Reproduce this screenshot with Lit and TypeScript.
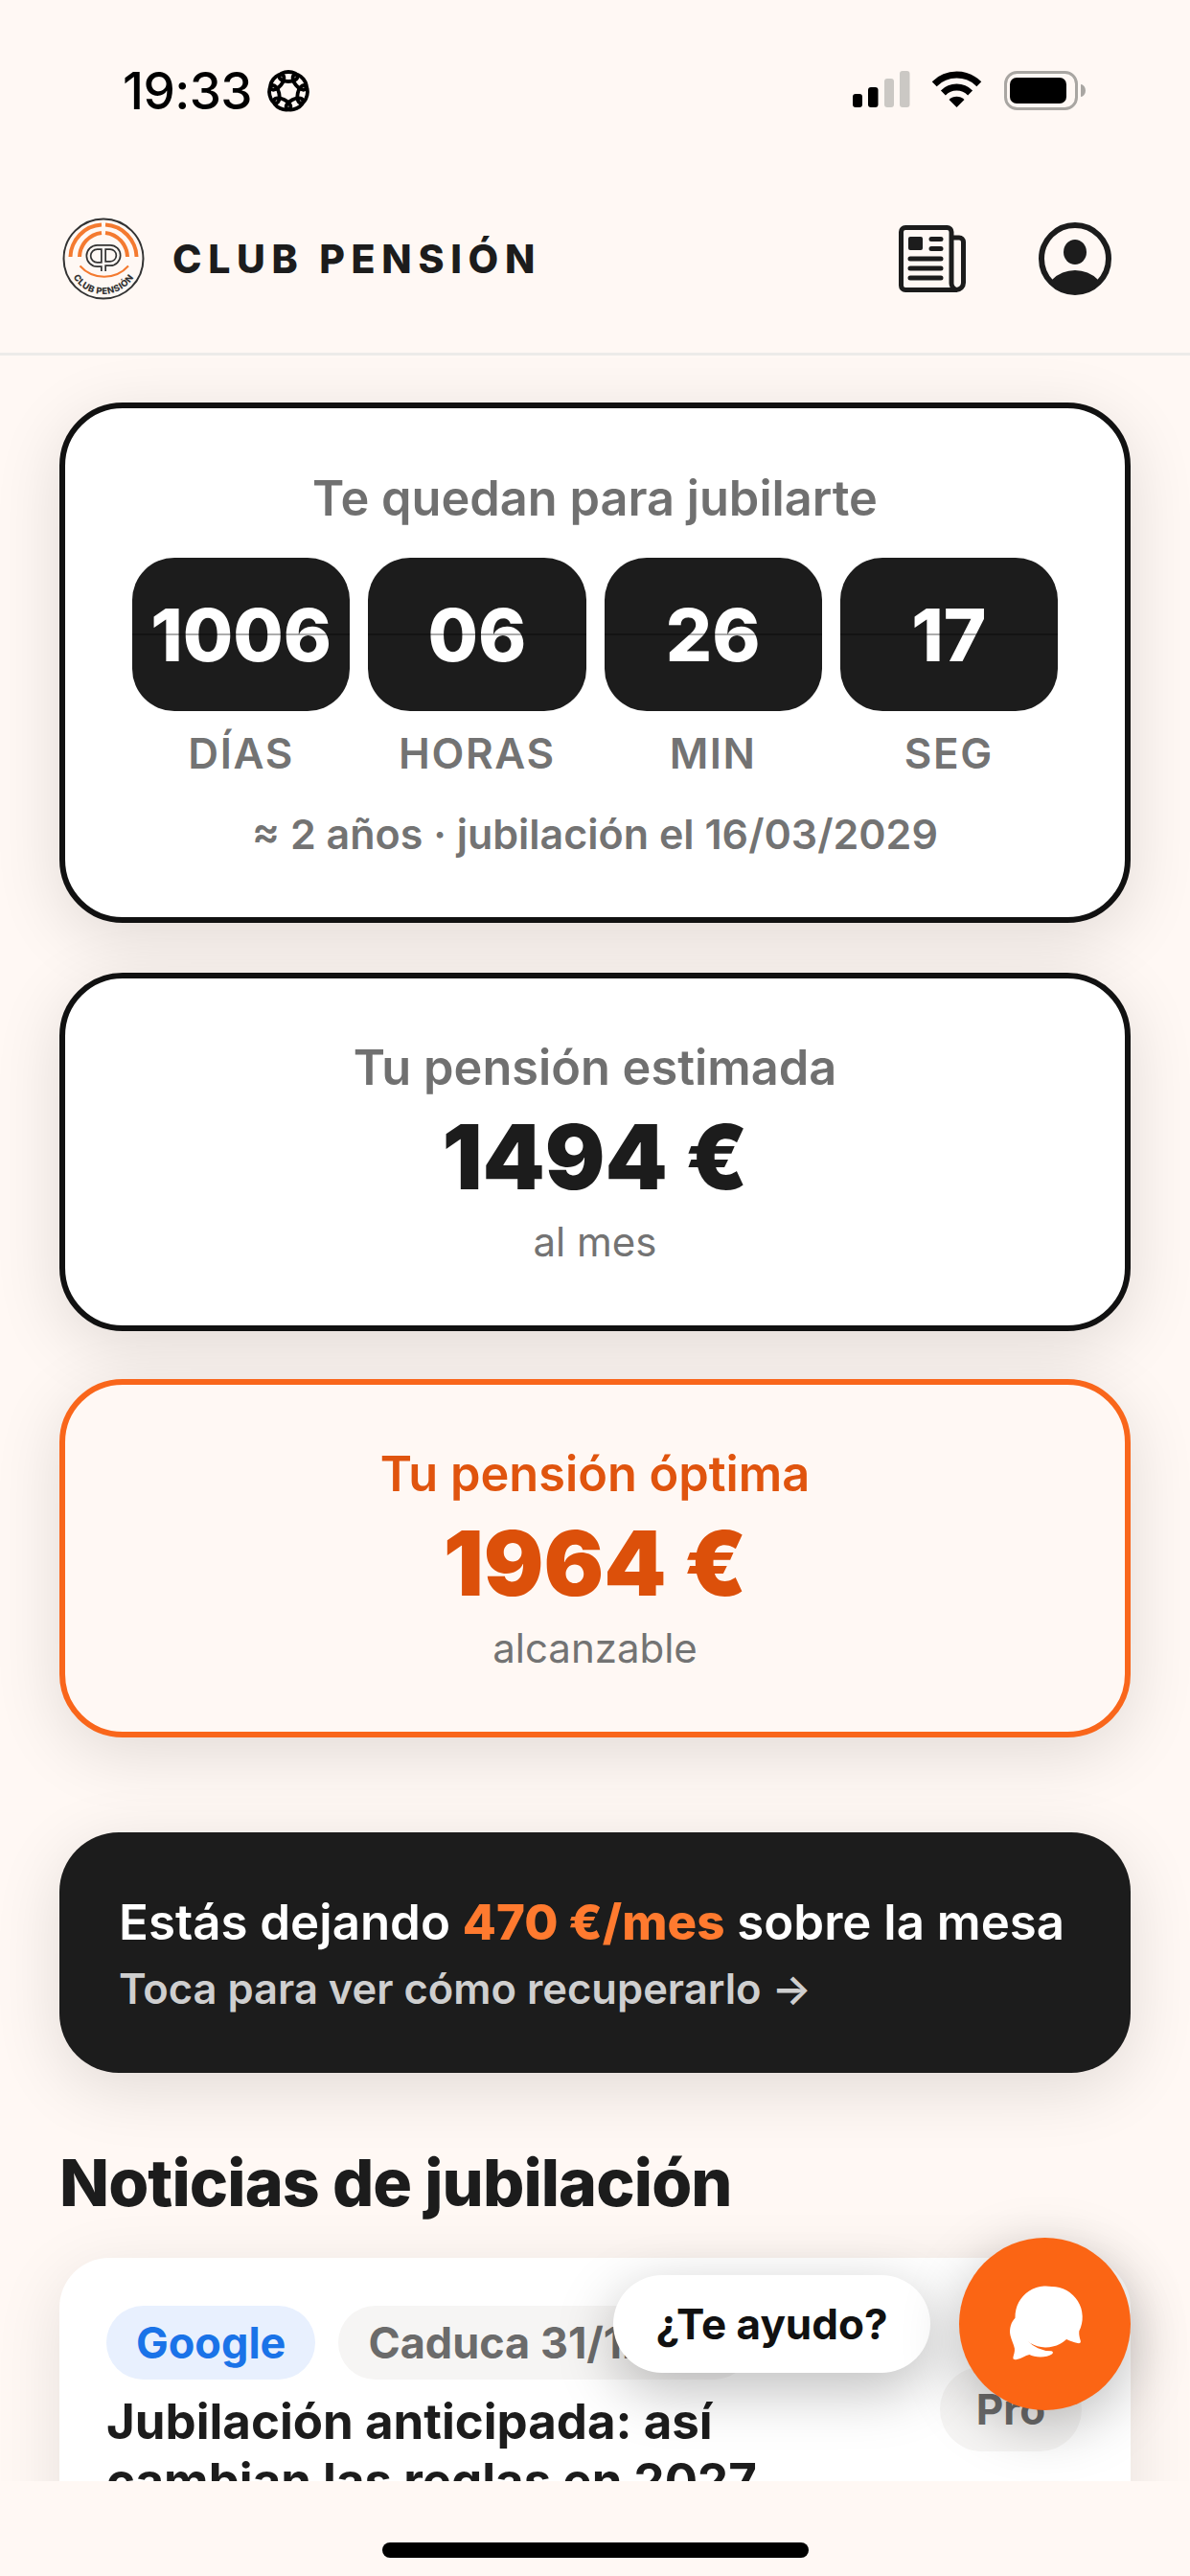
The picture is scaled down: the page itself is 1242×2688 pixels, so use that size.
import { LitElement, html, css, svg } from "lit";
import { customElement } from "lit/decorators.js";

const flower = () => svg`${[0, 1, 2, 3, 4, 5, 6].map(
  (i) => svg`<ellipse cx="24" cy="9" rx="9.500" ry="5" transform="rotate(${(i * 360) / 7} 24 24)" />`
)}`;

@customElement("app-root")
export class AppRoot extends LitElement {
  static styles = css`
    :host {
      display: flex;
      flex-direction: column;
      position: relative;
      width: 1242px;
      height: 2688px;
      overflow: hidden;
      background: #fff8f4;
      color: #1c1c1c;
      font-family: Inter, "Noto Sans", sans-serif;
    }
    svg { display: block; flex: none; }
    .status {
      flex: none;
      height: 171px;
      box-sizing: border-box;
      display: flex;
      align-items: flex-start;
      padding: 74px 109px 0 128px;
    }
    .time {
      font-size: 53px;
      font-weight: 500;
      line-height: 42px;
      color: #000;
      letter-spacing: -0.6px;
    }
    .focus { margin: -3px 0 0 14px; fill: none; stroke: #000; stroke-width: 3.8; }
    .sys { margin-left: auto; display: flex; align-items: flex-start; }
    .wifi { margin-left: 22px; }
    .batt { margin-left: 23px; }
    .header {
      flex: none;
      height: 200px;
      box-sizing: border-box;
      border-bottom: 3px solid #ecebe9;
      display: flex;
      align-items: center;
      padding: 0 82px 0 65px;
    }
    .brand {
      margin-left: 29px;
      font-size: 41px;
      font-weight: 800;
      letter-spacing: 6.7px;
      color: #1c1c1c;
    }
    .news-ico { margin-left: auto; }
    .user-ico { margin-left: 76px; }
    .main {
      flex: 1;
      min-height: 0;
      overflow: hidden;
      box-sizing: border-box;
      padding: 49px 62px 0;
      display: flex;
      flex-direction: column;
    }
    .card {
      flex: none;
      box-sizing: border-box;
      border: 6px solid #111;
      border-radius: 66px;
      background: #fff;
      text-align: center;
      box-shadow: 0 16px 70px rgba(0, 0, 0, 0.12);
      margin-bottom: 50px;
    }
    .timer { padding: 62px 70px 57px; margin-bottom: 52px; }
    .amount-card { padding: 61px 40px 59px; }
    .card-title {
      font-size: 50.5px;
      font-weight: 600;
      line-height: 64px;
      color: #707070;
    }
    .tiles {
      margin-top: 30px;
      display: grid;
      grid-template-columns: repeat(4, 1fr);
      column-gap: 19px;
    }
    .labels { margin-top: 0; }
    .tile {
      position: relative;
      height: 160px;
      border-radius: 44px;
      background: #1c1c1c;
      color: #fff;
      font-size: 76px;
      font-weight: 800;
      line-height: 160px;
    }
    .tile::after {
      content: "";
      position: absolute;
      left: 0;
      right: 0;
      top: 79px;
      height: 2px;
      background: rgba(0, 0, 0, 0.32);
    }
    .label {
      margin-top: 19px;
      font-size: 44px;
      font-weight: 600;
      line-height: 50px;
      letter-spacing: 1.6px;
      color: #737373;
    }
    .note {
      margin-top: 29px;
      font-size: 43px;
      font-weight: 600;
      line-height: 60px;
      color: #737373;
    }
    .amount {
      margin-top: 11px;
      font-size: 93px;
      font-weight: 900;
      line-height: 100px;
      color: #1c1c1c;
    }
    .sub {
      margin-top: 11px;
      font-size: 42px;
      line-height: 56px;
      color: #737373;
    }
    .best { border-color: #f9661b; background: #fff8f4; margin-bottom: 99px; }
    .best .card-title { color: #e0540e; }
    .best .amount { color: #dc500a; }
    .banner {
      flex: none;
      box-sizing: border-box;
      height: 251px;
      border-radius: 62px;
      background: #1c1c1c;
      padding: 64px 62px 0;
      box-shadow: 0 16px 70px rgba(0, 0, 0, 0.12);
    }
    .banner-main {
      font-size: 51px;
      font-weight: 600;
      line-height: 60px;
      color: #fff;
      white-space: nowrap;
    }
    .banner-main b { font-weight: 800; color: #ff7a2f; }
    .banner-sub {
      margin-top: 11px;
      font-size: 43.5px;
      font-weight: 600;
      line-height: 56px;
      color: #cfcfcf;
    }
    h2 {
      flex: none;
      margin: 74px 0 39px;
      font-size: 68px;
      font-weight: 800;
      line-height: 80px;
      letter-spacing: -0.9px;
      color: #1c1c1c;
    }
    .news {
      flex: none;
      position: relative;
      box-sizing: border-box;
      height: 400px;
      border-radius: 52px;
      background: #fff;
      padding: 50px 49px 0;
      box-shadow: 0 16px 70px rgba(0, 0, 0, 0.1);
    }
    .chips { display: flex; gap: 24px; }
    .chip {
      height: 77px;
      border-radius: 39px;
      padding: 0 31px;
      font-size: 45px;
      font-weight: 700;
      line-height: 77px;
      white-space: nowrap;
    }
    .google { background: #e8f0fe; color: #1a73e8; }
    .expires { background: #f6f5f4; color: #6b6b6b; }
    .pro {
      position: absolute;
      top: 114px;
      right: 51px;
      width: 148px;
      height: 88px;
      border-radius: 44px;
      background: #f6f5f4;
      color: #6b6b6b;
      font-size: 44px;
      font-weight: 700;
      line-height: 88px;
      text-align: center;
    }
    .news-title {
      margin-top: 13px;
      max-width: 800px;
      font-size: 51px;
      font-weight: 700;
      line-height: 62px;
      color: #1c1c1c;
    }
    .home {
      flex: none;
      height: 99px;
      box-sizing: border-box;
      padding-top: 64px;
      background: #fff8f4;
      position: relative;
      display: flex;
      justify-content: center;
    }
    .home i { display: block; width: 445px; height: 16px; border-radius: 8px; background: #000; }
    .help {
      position: absolute;
      right: 62px;
      bottom: 173px;
      display: flex;
      align-items: center;
      gap: 30px;
    }
    .bubble {
      width: 331px;
      height: 102px;
      border-radius: 51px;
      background: #fff;
      text-align: center;
      font-size: 44px;
      font-weight: 700;
      line-height: 102px;
      color: #111;
      box-shadow: 0 18px 60px rgba(0, 0, 0, 0.26);
    }
    .fab {
      width: 179px;
      height: 180px;
      border-radius: 50%;
      background: #fb6514;
      display: flex;
      align-items: center;
      justify-content: center;
      box-shadow: 0 16px 60px rgba(0, 0, 0, 0.26);
    }
  `;

  render() {
    const tiles = [
      ["1006", "DÍAS"],
      ["06", "HORAS"],
      ["26", "MIN"],
      ["17", "SEG"],
    ];
    return html`
      <div class="status">
        <span class="time">19:33</span>
        <svg class="focus" width="48" height="48" viewBox="0 0 48 48">${flower()}</svg>
        <div class="sys">
          <svg width="61" height="39" viewBox="0 0 61 39">
            <rect x="1" y="24" width="10" height="14" rx="3" fill="#000" />
            <rect x="17" y="17" width="10.5" height="21" rx="3" fill="#000" />
            <rect x="34" y="8" width="10" height="30" rx="3" fill="#cbc8c4" />
            <rect x="50" y="0" width="10.5" height="38" rx="3" fill="#cbc8c4" />
          </svg>
          <svg class="wifi" width="53" height="39" viewBox="0 0 52 39">
            <path d="M2.7 13.7A33 33 0 0 1 49.3 13.7M11.9 22.9A20 20 0 0 1 40.1 22.9" fill="none" stroke="#000" stroke-width="7" />
            <path d="M26 38L18 30A11.5 11.5 0 0 1 34 30Z" fill="#000" />
          </svg>
          <svg class="batt" width="85" height="41" viewBox="0 0 85 41">
            <rect x="1.5" y="1.5" width="74" height="38" rx="12" fill="none" stroke="#a9a6a2" stroke-width="3" />
            <rect x="6" y="7" width="59" height="27" rx="7" fill="#000" />
            <path d="M80 14a5 6.5 0 0 1 0 13Z" fill="#a9a6a2" />
          </svg>
        </div>
      </div>
      <header class="header">
        <svg width="86" height="86" viewBox="0 0 86 86">
          <circle cx="43" cy="43" r="41.500" fill="none" stroke="#333" stroke-width="2" />
          <g fill="none" stroke="#f47a30">
            <path d="M8.500 41A34.500 34.500 0 0 1 41 7.600M45 7.600A34.500 34.500 0 0 1 77.500 41" stroke-width="4" />
            <path d="M18 41A26 26 0 0 1 41 16M45 16A26 26 0 0 1 68 41" stroke-width="4" />
            <path d="M18.500 50.500A34 34 0 0 0 69 50.500" stroke-width="2" />
          </g>
          <g fill="none" stroke-linejoin="round">
            <path d="M43 31H36.500a9 9 0 0 0 0 18H43M43 56V31H50a8.500 8.500 0 0 1 0 17H43" stroke="#333" stroke-width="6" />
            <path d="M43 31H36.500a9 9 0 0 0 0 18H43M43 56V31H50a8.500 8.500 0 0 1 0 17H43" stroke="#fff8f4" stroke-width="2.600" />
          </g>
          <defs><path id="ring" d="M6 43A37 37 0 0 0 80 43" /></defs>
          <text font-family="Inter, sans-serif" font-size="9.400" font-weight="800" fill="#333" letter-spacing="0.500" text-anchor="middle">
            <textPath href="#ring" startOffset="50%">CLUB PENSIÓN</textPath>
          </text>
        </svg>
        <span class="brand">CLUB PENSIÓN</span>
        <svg class="news-ico" width="70" height="70" viewBox="0 0 70 70" fill="none" stroke="#1c1c1c" stroke-width="5" stroke-linecap="round" stroke-linejoin="round">
          <path d="M55 13h8a4.500 4.500 0 0 1 4.500 4.500V60a7.500 7.500 0 0 1-7.500 7.500H7A4.500 4.500 0 0 1 2.500 63V7A4.500 4.500 0 0 1 7 2.500h43.500A4.500 4.500 0 0 1 55 7V60a7.500 7.500 0 0 0 5 7.500" />
          <rect x="10" y="12" width="15" height="14" rx="2" fill="#1c1c1c" stroke="none" />
          <path d="M34 14.500H44M34 24.500H44M12 35H44M12 45H44M12 55H44" />
        </svg>
        <svg class="user-ico" width="76" height="76" viewBox="0 0 76 76">
          <defs><clipPath id="disc"><circle cx="38" cy="38" r="36" /></clipPath></defs>
          <circle cx="38" cy="38" r="35" fill="none" stroke="#1c1c1c" stroke-width="6" />
          <ellipse cx="38" cy="31" rx="12" ry="13" fill="#1c1c1c" />
          <circle cx="38" cy="84" r="34" fill="#1c1c1c" clip-path="url(#disc)" />
        </svg>
      </header>
      <main class="main">
        <section class="card timer">
          <div class="card-title">Te quedan para jubilarte</div>
          <div class="tiles">${tiles.map(([n]) => html`<div class="tile">${n}</div>`)}</div>
          <div class="tiles labels">
            ${tiles.map(([, l]) => html`<div class="label">${l}</div>`)}
          </div>
          <div class="note">≈ 2 años · jubilación el 16/03/2029</div>
        </section>
        <section class="card amount-card">
          <div class="card-title">Tu pensión estimada</div>
          <div class="amount">1494 €</div>
          <div class="sub">al mes</div>
        </section>
        <section class="card amount-card best">
          <div class="card-title">Tu pensión óptima</div>
          <div class="amount">1964 €</div>
          <div class="sub">alcanzable</div>
        </section>
        <section class="banner">
          <div class="banner-main">Estás dejando <b>470 €/mes</b> sobre la mesa</div>
          <div class="banner-sub">Toca para ver cómo recuperarlo →</div>
        </section>
        <h2>Noticias de jubilación</h2>
        <article class="news">
          <div class="chips">
            <span class="chip google">Google</span>
            <span class="chip expires">Caduca 31/12/26</span>
          </div>
          <span class="pro">Pro</span>
          <div class="news-title">Jubilación anticipada: así cambian las reglas en 2027</div>
        </article>
      </main>
      <div class="home"><i></i></div>
      <div class="help">
        <div class="bubble">¿Te ayudo?</div>
        <div class="fab">
          <svg width="120" height="110" viewBox="0 0 120 110" fill="#fff">
            <path d="M66.700 16a32 32 0 0 1 28.600 46.400c-.4 3.600.6 7.400 1.400 9.800.7 2.200-.6 3.400-3 2.900-4.200-.9-8-2.400-11.600-4.100A32 32 0 1 1 66.700 16Z" />
            <path d="M29 48.500C24.500 52 22 60 23.500 67c1.100 5 3.600 9 4.400 13.500.6 3.500-1.200 7-1.500 9.500-.3 2.200 1.600 2.500 4 2 5-1.100 8.500-4 13-5 5.500 3.200 18 3.500 23.500-.5 1.700-1.300 1.300-3-.7-3.200A36 36 0 0 1 31 45.500c-.5-1.500-1.300-.5-2 3Z" />
          </svg>
        </div>
      </div>
    `;
  }
}
